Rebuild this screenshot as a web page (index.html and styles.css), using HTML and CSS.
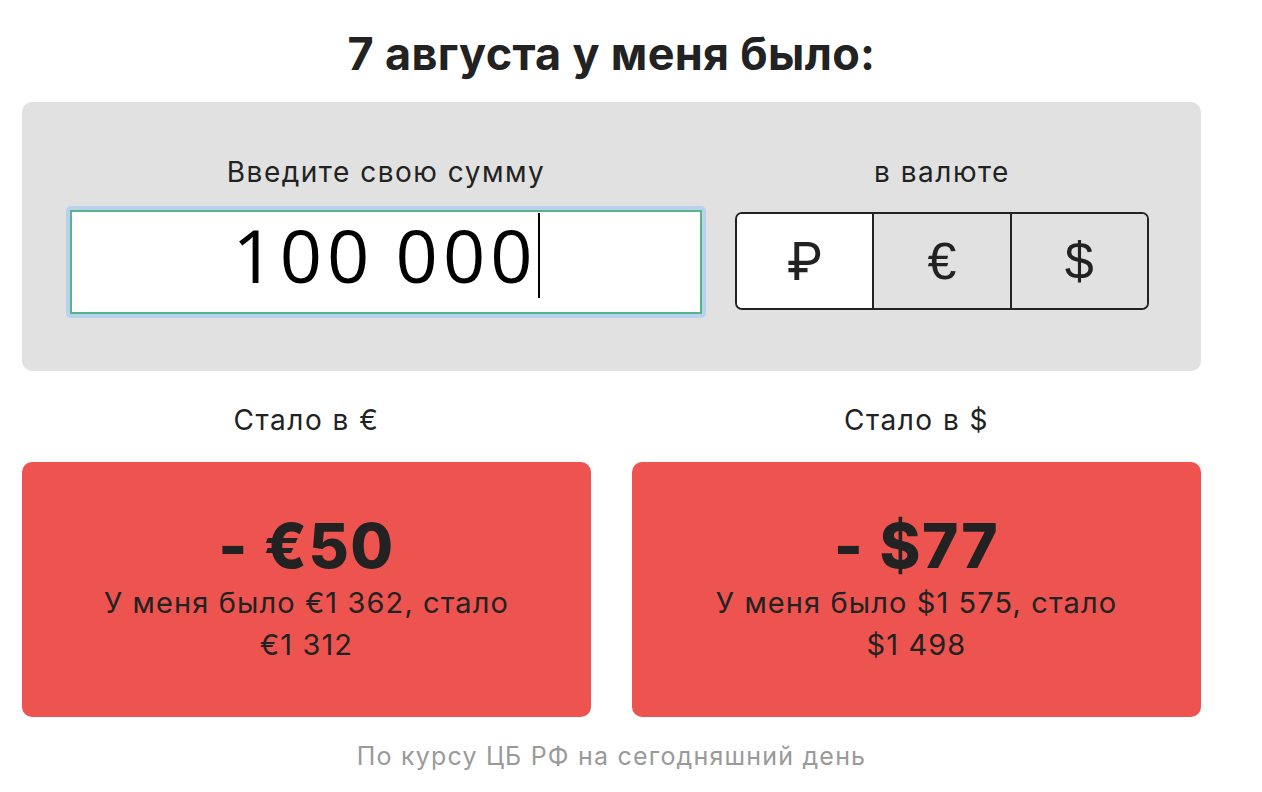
FILE: index.html
```html
<!DOCTYPE html>
<html lang="ru">
<head>
<meta charset="utf-8">
<link rel="stylesheet" href="styles.css">
</head>
<body>
<div class="page">
  <h1 class="title">7 августа у меня было:</h1>
  <div class="panel">
    <div class="col col-amount">
      <div class="label">Введите свою сумму</div>
      <div class="input-ring">
        <div class="input-box"><span class="input-value">100 000</span><span class="caret"></span></div>
      </div>
    </div>
    <div class="col col-currency">
      <div class="label">в валюте</div>
      <div class="seg">
        <div class="seg-btn active">₽</div>
        <div class="seg-btn">€</div>
        <div class="seg-btn">$</div>
      </div>
    </div>
  </div>
  <div class="results">
    <div class="result">
      <div class="label">Стало в €</div>
      <div class="card">
        <div class="diff">- €50</div>
        <div class="desc">У меня было €1 362, стало<br>€1 312</div>
      </div>
    </div>
    <div class="result">
      <div class="label">Стало в $</div>
      <div class="card">
        <div class="diff">- $77</div>
        <div class="desc">У меня было $1 575, стало<br>$1 498</div>
      </div>
    </div>
  </div>
  <div class="note">По курсу ЦБ РФ на сегодняшний день</div>
</div>
</body>
</html>
```

FILE: styles.css
```css
* { box-sizing: border-box; }
html, body { margin: 0; padding: 0; background: #fff; }
body {
  font-family: "Inter", "Roboto", "Liberation Sans", sans-serif;
  color: #222;
}
.page {
  width: 1179px;
  margin-left: 22px;
}
.title {
  margin: 0;
  padding-top: 28px;
  height: 102px;
  text-align: center;
  font-size: 45px;
  line-height: 52px;
  font-weight: 700;
  letter-spacing: 0.3px;
  color: #222;
}
.panel {
  background: #e1e1e1;
  border-radius: 10px;
  height: 269px;
  display: flex;
  padding: 53px 52px 0 44px;
  gap: 29px;
}
.col { display: flex; flex-direction: column; align-items: center; }
.col-amount { width: 640px; }
.col-currency { width: 414px; }
.label {
  font-size: 28px;
  line-height: 34px;
  font-weight: 400;
  letter-spacing: 1.5px;
  color: #222;
  text-align: center;
}
.col-amount .label, .col-currency .label { height: 51px; }
.input-ring {
  width: 640px;
  height: 112px;
  background: #b8d2ee;
  border-radius: 5px;
  padding: 4px;
}
.input-box {
  width: 100%;
  height: 100%;
  background: #fff;
  border: 2px solid #5ab48a;
  display: flex;
  align-items: center;
  justify-content: center;
  font-family: "Open Sans", "Liberation Sans", sans-serif;
  font-size: 74px;
  color: #000;
}
.input-value {
  line-height: 1;
  letter-spacing: 5px;
  word-spacing: -3px;
  margin-bottom: 14px;
}
.caret {
  width: 2px;
  height: 85px;
  background: #000;
  margin-left: 0;
  margin-bottom: 13px;
}
.seg {
  margin-top: 6px;
  width: 414px;
  height: 98px;
  display: flex;
  border: 2px solid #222;
  border-radius: 7px;
  overflow: hidden;
}
.seg-btn {
  flex: 1;
  display: flex;
  align-items: center;
  justify-content: center;
  font-size: 52px;
  font-family: "Liberation Sans", "Inter", sans-serif;
  color: #222;
  background: #e1e1e1;
  border-left: 2px solid #222;
}
.seg-btn:first-child { border-left: none; }
.seg-btn.active { background: #fff; }
.results {
  display: flex;
  gap: 41px;
  margin-top: 32px;
}
.result { flex: 1; display: flex; flex-direction: column; align-items: center; }
.result .label { height: 59px; }
.card {
  width: 100%;
  height: 255px;
  background: #ed544f;
  border-radius: 10px;
  display: flex;
  flex-direction: column;
  align-items: center;
  padding-top: 48px;
}
.diff {
  font-size: 62px;
  line-height: 72px;
  font-weight: 800;
  letter-spacing: 1.5px;
  color: #222;
}
.desc {
  font-size: 29px;
  line-height: 42px;
  letter-spacing: 1.1px;
  text-align: center;
  color: #222;
}
.note {
  text-align: center;
  margin-top: 24px;
  font-size: 25px;
  line-height: 30px;
  letter-spacing: 1.2px;
  color: #9a9a9a;
}
```
